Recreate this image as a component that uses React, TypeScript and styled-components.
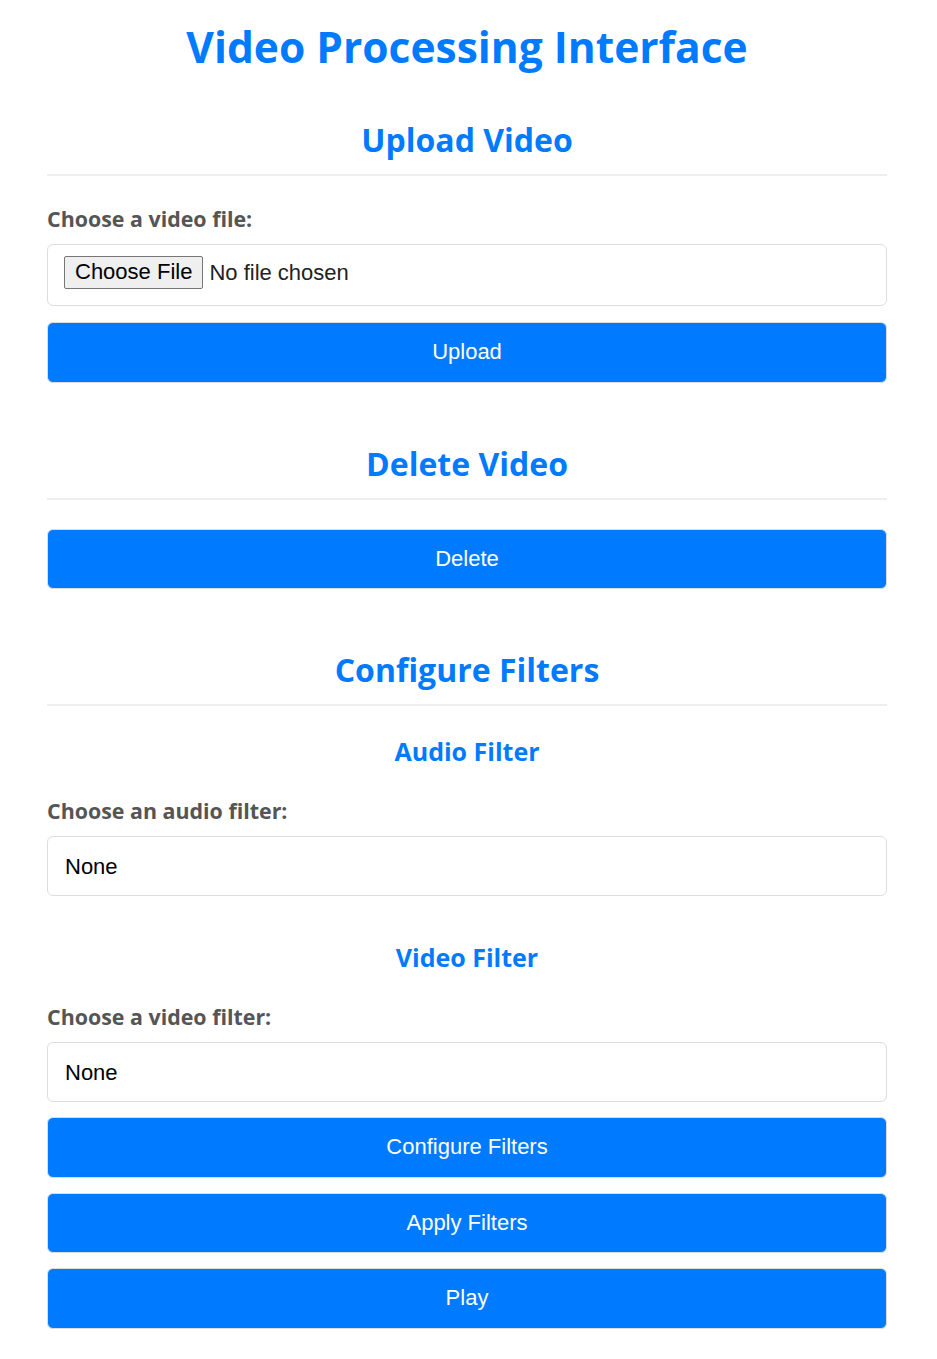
import React from "react";
import styled, { createGlobalStyle } from "styled-components";

const GlobalStyle = createGlobalStyle`
  html, body { margin: 0; padding: 0; background: #ffffff; }
  body { font-family: "Liberation Sans", Arial, sans-serif; }
  * { box-sizing: border-box; }
`;

const headingFont = `"Open Sans", "Lato", sans-serif`;

const Container = styled.main`
  max-width: 843px;
  margin: 0 auto;
  padding: 20px 3px 30px 0;
`;

const Title = styled.h1`
  margin: 0 0 46px;
  font-family: ${headingFont};
  font-weight: 700;
  font-size: 42.5px;
  line-height: 54px;
  color: #007bff;
  text-align: center;
`;

const Section = styled.section`
  margin-bottom: 61px;
  &:last-child { margin-bottom: 0; }
`;

const SectionTitle = styled.h2`
  margin: 0 0 29px;
  padding-bottom: 14px;
  border-bottom: 2px solid #eeeeee;
  font-family: ${headingFont};
  font-weight: 700;
  font-size: 32px;
  line-height: 40px;
  color: #007bff;
  text-align: center;
`;

const SubTitle = styled.h3`
  margin: 0 0 30px;
  font-family: ${headingFont};
  font-weight: 700;
  font-size: 25px;
  line-height: 32px;
  color: #007bff;
  text-align: center;
`;

const Group = styled.div<{ $gapAfter?: number }>`
  margin-bottom: ${(p) => p.$gapAfter ?? 0}px;
`;

const Label = styled.label`
  display: block;
  margin-bottom: 11px;
  font-family: ${headingFont};
  font-weight: 700;
  font-size: 21.4px;
  line-height: 28px;
  color: #555555;
`;

const FileBox = styled.div`
  display: flex;
  align-items: center;
  height: 62px;
  padding: 0 16px;
  border: 1px solid #dddddd;
  border-radius: 6px;
  margin-bottom: 16px;
`;

const FileInput = styled.input`
  font-family: "Liberation Sans", Arial, sans-serif;
  font-size: 22px;
  color: #222;
  margin: -6px 0 0;
  &::file-selector-button {
    font-family: "Liberation Sans", Arial, sans-serif;
    font-size: 22px;
    height: 33px;
    padding: 0 10px;
    margin-right: 6px;
    background: #efefef;
    border: 1px solid #767676;
    border-radius: 2px;
    color: #000;
  }
`;

const Select = styled.select`
  display: block;
  width: 100%;
  height: 60px;
  padding: 0 17px;
  appearance: none;
  -webkit-appearance: none;
  background: #ffffff;
  border: 1px solid #dddddd;
  border-radius: 6px;
  font-family: "Liberation Sans", Arial, sans-serif;
  font-size: 22px;
  color: #000;
  margin-bottom: 15px;
`;

const Button = styled.button`
  display: block;
  width: 100%;
  height: 60.5px;
  background: #007bff;
  color: #ffffff;
  border: 1px solid #dddddd;
  border-radius: 6px;
  font-family: "Liberation Sans", Arial, sans-serif;
  font-size: 22px;
  cursor: pointer;
  & + & { margin-top: 15px; }
`;

export default function App() {
  return (
    <>
      <GlobalStyle />
      <Container>
        <Title>Video Processing Interface</Title>

        <Section>
          <SectionTitle>Upload Video</SectionTitle>
          <Label htmlFor="video-file">Choose a video file:</Label>
          <FileBox>
            <FileInput id="video-file" type="file" accept="video/*" />
          </FileBox>
          <Button>Upload</Button>
        </Section>

        <Section>
          <SectionTitle>Delete Video</SectionTitle>
          <Button>Delete</Button>
        </Section>

        <Section>
          <SectionTitle>Configure Filters</SectionTitle>
          <Group $gapAfter={45}>
            <SubTitle>Audio Filter</SubTitle>
            <Label htmlFor="audio-filter">Choose an audio filter:</Label>
            <Select id="audio-filter" defaultValue="none">
              <option value="none">None</option>
            </Select>
          </Group>
          <Group>
            <SubTitle>Video Filter</SubTitle>
            <Label htmlFor="video-filter">Choose a video filter:</Label>
            <Select id="video-filter" defaultValue="none">
              <option value="none">None</option>
            </Select>
          </Group>
          <Button>Configure Filters</Button>
          <Button>Apply Filters</Button>
          <Button>Play</Button>
        </Section>
      </Container>
    </>
  );
}
